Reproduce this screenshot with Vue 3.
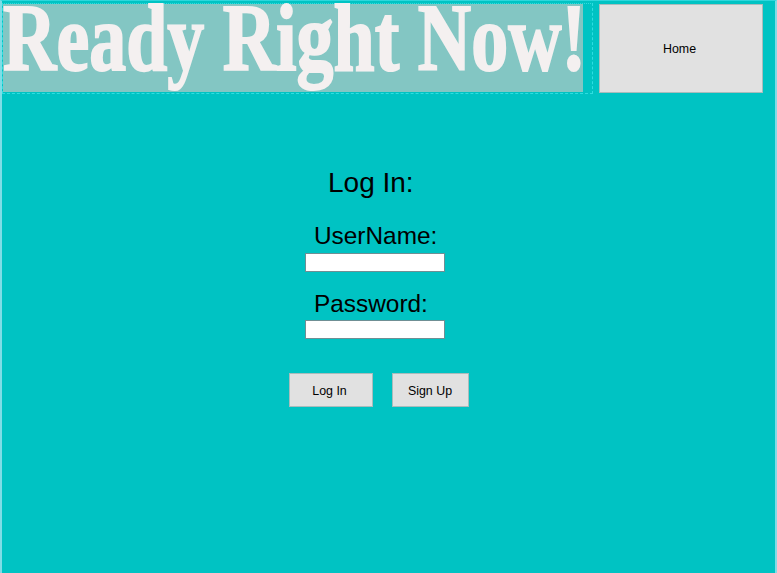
<template>
  <div class="page">
    <!-- header -->
    <header class="top">
      <div class="banner">
        <div class="banner-img">
          <h1 class="banner-text">Ready Right Now!</h1>
        </div>
      </div>
      <button class="btn home-btn">Home</button>
    </header>

    <!-- login form -->
    <main class="login">
      <h2 class="title">Log In:</h2>
      <label class="field-label" for="username">UserName:</label>
      <input id="username" v-model="username" class="field" type="text" />
      <label class="field-label pass-label" for="password">Password:</label>
      <input id="password" v-model="password" class="field pass-field" type="password" />
      <div class="actions">
        <button class="btn login-btn">Log In</button>
        <button class="btn signup-btn">Sign Up</button>
      </div>
    </main>
  </div>
</template>

<script setup>
import { ref } from 'vue'

const username = ref('')
const password = ref('')
</script>

<style>
html,
body {
  margin: 0;
  background: #00c3c3;
}
</style>

<style scoped>
.page {
  box-sizing: border-box;
  width: 777px;
  height: 573px;
  padding: 2px 0 0 2px;
  overflow: hidden;
  background: #00c3c3;
  border-top: 1px solid #2fd6dc;
  border-left: 2px solid #7fdde6;
  border-right: 2px solid #7fdde6;
  font-family: "Liberation Sans", Arial, sans-serif;
  color: #000;
}

.top {
  display: flex;
  align-items: flex-start;
  gap: 6px;
  margin-left: -2px;
}

.banner {
  box-sizing: border-box;
  width: 591px;
  height: 91px;
  border: 1px dashed #2fdde0;
  border-top-style: dotted;
  padding: 0 9px 1px 0;
}

.banner-img {
  display: flow-root;
  height: 100%;
  background: #83c6c3;
}

.banner-text {
  width: 755px;
  margin: -1px 0 0 0;
  font-family: "Liberation Serif", serif;
  font-size: 96px;
  font-weight: 700;
  line-height: 70px;
  white-space: nowrap;
  color: #f4f0f0;
  -webkit-text-stroke: 2px #f4f0f0;
  transform: scaleX(0.77);
  transform-origin: left top;
}

.btn {
  box-sizing: border-box;
  padding: 0;
  background: #e1e1e1;
  border: 1px solid #a9bcbc;
  font-family: "Liberation Sans", Arial, sans-serif;
  font-size: 12.4px;
  color: #000;
}

.home-btn {
  width: 164px;
  height: 89px;
  margin-top: 1px;
  padding-right: 3px;
}

.login {
  display: flex;
  flex-direction: column;
  align-items: flex-start;
  width: 190px;
  margin: 71px 0 0 283px;
}

.title {
  margin: 0 0 0 41px;
  font-size: 28px;
  font-weight: 400;
  line-height: 36px;
}

.field-label {
  margin: 21px 0 0 27px;
  font-size: 24.4px;
  line-height: 28px;
}

.pass-label {
  margin-top: 18px;
  margin-left: 27px;
}

.field {
  box-sizing: border-box;
  width: 140px;
  height: 19px;
  margin: 3px 0 0 18px;
  padding: 0 2px;
  background: #fff;
  border: 1px solid #6f8f94;
  outline: none;
}

.pass-field {
  margin-top: 2px;
}

.actions {
  display: flex;
  gap: 19px;
  margin: 34px 0 0 2px;
}

.login-btn {
  width: 84px;
  height: 34px;
  padding: 1px 3px 0 0;
}

.signup-btn {
  width: 77px;
  height: 34px;
  padding: 1px 1px 0 0;
}
</style>
